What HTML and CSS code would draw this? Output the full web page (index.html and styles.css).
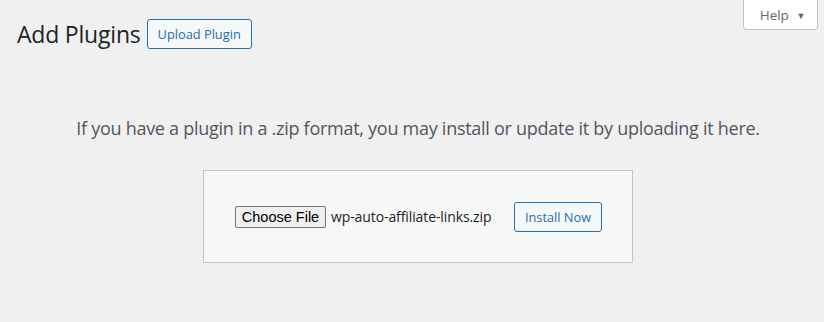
FILE: index.html
```html
<!DOCTYPE html>
<html lang="en">

<head>
   <meta charset="UTF-8" />
   <meta name="viewport" content="width=device-width, initial-scale=1" />
   <title>Add Plugins</title>
   <link rel="stylesheet" href="styles.css">
</head>

<body>
   <div class="screen-meta-links">
      <button class="help-tab">Help <span class="arrow">&#9660;</span></button>
   </div>

   <div class="wrap">
      <div class="page-head">
         <h1 class="page-title">Add Plugins</h1>
         <button class="page-title-action">Upload Plugin</button>
      </div>

      <div class="upload-plugin">
         <p class="install-help">If you have a plugin in a .zip format, you may install or update it by uploading it here.</p>
         <form class="upload-form" onsubmit="return false;">
            <div class="file-field">
               <button type="button" class="choose-file">Choose File</button>
               <span class="file-name">wp-auto-affiliate-links.zip</span>
            </div>
            <button type="submit" class="button">Install Now</button>
         </form>
      </div>
   </div>
</body>

</html>
```

FILE: styles.css
```css
:root {
   --bg: #f0f0f1;
   --text: #1d2327;
   --muted: #50575e;
   --blue: #2271b1;
   --border: #c3c4c7;
   --light: #f6f7f7;
}

* {
   box-sizing: border-box;
   margin: 0;
   padding: 0;
}

body {
   font-family: 'Open Sans', 'Noto Sans', sans-serif;
   background: var(--bg);
   color: var(--text);
   min-height: 100vh;
}

.screen-meta-links {
   float: right;
   margin-right: 6px;
}

.help-tab {
   width: 75px;
   height: 30px;
   background: #fff;
   border: 1px solid var(--border);
   border-top: none;
   border-radius: 0 0 4px 4px;
   color: #646970;
   font-family: inherit;
   font-size: 13.5px;
   padding-left: 4px;
   cursor: pointer;
}

.help-tab .arrow {
   font-size: 9px;
   margin-left: 4px;
   position: relative;
   top: -1px;
}

.wrap {
   padding: 0 0 0 17px;
}

.page-head {
   display: flex;
   align-items: center;
   gap: 6px;
   padding-top: 19px;
}

.page-title {
   font-size: 23px;
   font-weight: 400;
   line-height: 30px;
   letter-spacing: -0.2px;
}

.page-title-action {
   height: 30px;
   padding: 0 10px;
   border: 1px solid var(--blue);
   border-radius: 3px;
   background: var(--light);
   color: var(--blue);
   font-family: inherit;
   font-size: 12.8px;
   cursor: pointer;
}

.upload-plugin {
   display: flex;
   flex-direction: column;
   align-items: center;
   padding-right: 5px;
}

.install-help {
   color: var(--muted);
   font-size: 18px;
   line-height: 24px;
   padding: 67px 0 30px;
   letter-spacing: -0.27px;
}

.upload-form {
   display: flex;
   align-items: center;
   width: 430px;
   height: 93px;
   padding: 0 30px 0 31px;
   background: var(--light);
   border: 1px solid var(--border);
}

.file-field {
   display: flex;
   align-items: center;
   gap: 5px;
   flex: 1;
}

.choose-file {
   width: 91px;
   height: 22px;
   background: #efefef;
   border: 1px solid #767676;
   border-radius: 2px;
   color: #000;
   font-family: 'Liberation Sans', Arial, sans-serif;
   font-size: 14.5px;
}

.file-name {
   font-size: 14px;
   letter-spacing: -0.1px;
   color: var(--text);
}

.button {
   width: 88px;
   height: 30px;
   border: 1px solid var(--blue);
   border-radius: 3px;
   background: var(--light);
   color: var(--blue);
   font-family: inherit;
   font-size: 12.8px;
   cursor: pointer;
}
```
